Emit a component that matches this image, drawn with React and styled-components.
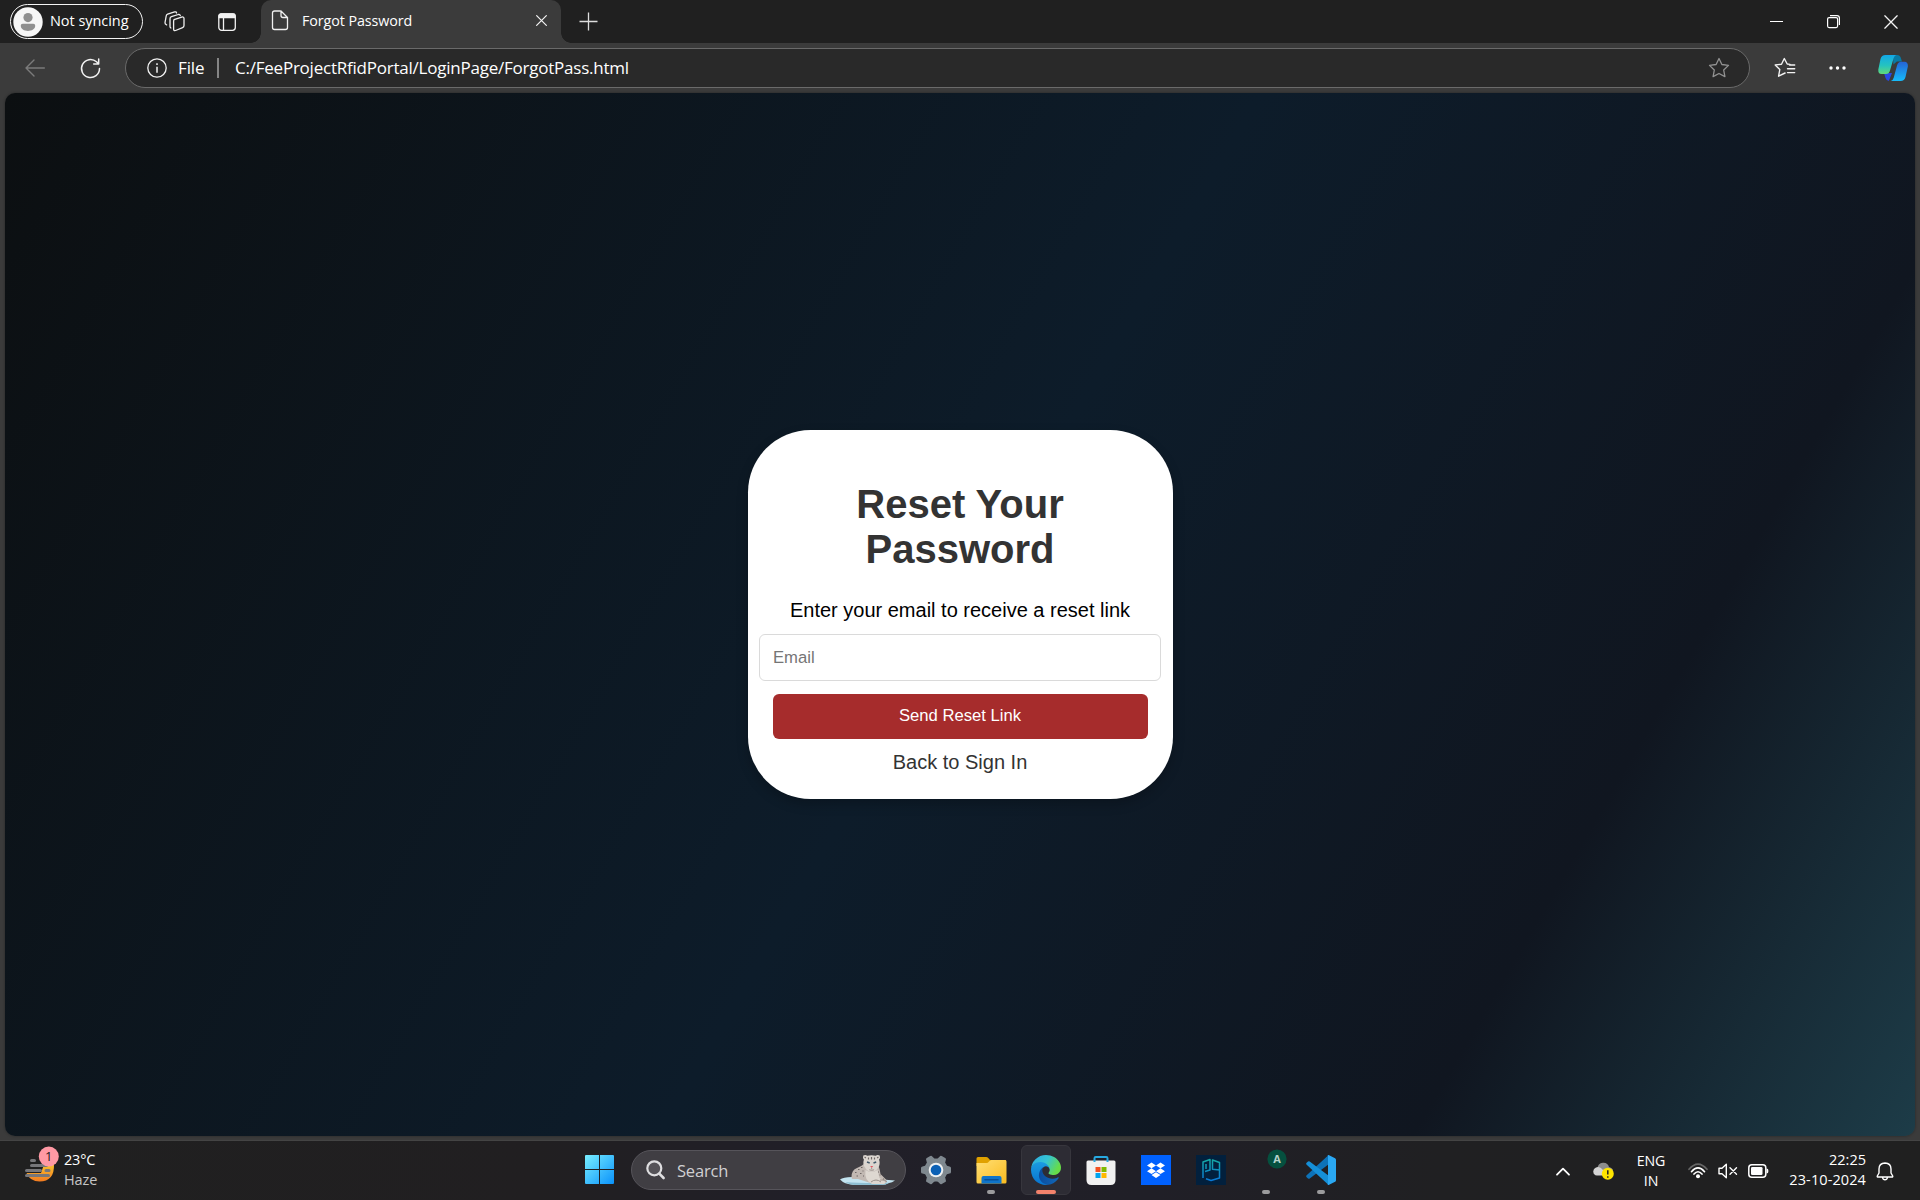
import React from "react";
import styled, { createGlobalStyle, css } from "styled-components";

const ui = `"Open Sans", "Noto Sans", sans-serif`;

const Global = createGlobalStyle`
  * { box-sizing: border-box; }
  body { margin: 0; background: #3b3b3b; overflow: hidden; }
`;

const Screen = styled.div`
  width: 1920px;
  height: 1200px;
  display: flex;
  flex-direction: column;
  background: #3b3b3b;
  font-family: ${ui};
  color: #fff;
  overflow: hidden;
`;

const Text = styled.span`
  font-family: ${ui};
  font-size: ${(p) => p.$size || 15}px;
  letter-spacing: ${(p) => p.$track || 0}px;
  line-height: ${(p) => p.$line || 20}px;
  color: ${(p) => p.$color || "#fff"};
  white-space: nowrap;
`;

const Icon = styled.svg`
  display: block;
  flex: none;
  overflow: visible;
`;

/* ---------- title bar ---------- */

const TitleBar = styled.header`
  height: 43px;
  flex: none;
  display: flex;
  align-items: flex-start;
  background: #202020;
`;

const Profile = styled.div`
  width: 133px;
  height: 35px;
  margin: 4px 0 0 10px;
  padding-left: 2px;
  display: flex;
  align-items: center;
  gap: 7px;
  border: 1.5px solid #f4f4f4;
  border-radius: 18px;
`;

const ProfileName = styled(Text)`
  padding-bottom: 2px;
`;

const TitleIcons = styled.div`
  height: 43px;
  margin-left: 21px;
  display: flex;
  align-items: center;
  gap: 33px;
  width: 97px;
`;

const Tab = styled.div`
  position: relative;
  width: 300px;
  height: 43px;
  padding: 0 14px 2px 10px;
  display: flex;
  align-items: center;
  background: #3b3b3b;
  border-radius: 10px 10px 0 0;

  &::before, &::after {
    content: "";
    position: absolute;
    bottom: 0;
    width: 10px;
    height: 10px;
  }
  &::before {
    left: -10px;
    background: radial-gradient(circle at 0 0, #202020 9.5px, #3b3b3b 10px);
  }
  &::after {
    right: -10px;
    background: radial-gradient(circle at 100% 0, #202020 9.5px, #3b3b3b 10px);
  }
`;

const TabTitle = styled(Text)`
  flex: 1;
  margin-left: 13px;
`;

const NewTab = styled.div`
  height: 42px;
  margin-left: 18px;
  display: flex;
  align-items: center;
  flex: 1;
`;

const WindowButtons = styled.div`
  height: 43px;
  display: flex;
  align-items: center;
  gap: 44px;
  padding-right: 22px;
`;

/* ---------- address bar ---------- */

const Toolbar = styled.nav`
  height: 50px;
  flex: none;
  display: flex;
  align-items: center;
  background: #3b3b3b;
`;

const NavButtons = styled.div`
  width: 125px;
  padding-left: 25px;
  display: flex;
  align-items: center;
  gap: 35px;
`;

const Address = styled.div`
  width: 1625px;
  height: 40px;
  padding: 0 19px 0 21px;
  display: flex;
  align-items: center;
  background: #292929;
  border: 1px solid #6a6a6a;
  border-radius: 20px;
`;

const Scheme = styled(Text)`
  width: 39px;
  margin-left: 11px;
  padding-bottom: 1px;
`;

const Divider = styled.i`
  width: 2px;
  height: 20px;
  margin-right: 16px;
  background: #858585;
`;

const Url = styled(Text)`
  flex: 1;
  padding-bottom: 1px;
`;

const Actions = styled.div`
  flex: 1;
  height: 40px;
  display: flex;
  align-items: center;
  justify-content: space-between;
  padding: 0 12px 0 24px;
`;

/* ---------- page ---------- */

const Viewport = styled.main`
  width: 1910px;
  height: 1043px;
  margin: 0 0 0 5px;
  flex: none;
  display: flex;
  align-items: center;
  justify-content: center;
  border-radius: 10px;
  background: linear-gradient(120deg, #0c0f11 0%, #0d1c2a 50%, #101620 80%, #1d3c48 100%);
  box-shadow: 0 0 3px rgba(0, 0, 0, 0.35);
`;

const Card = styled.form`
  width: 425px;
  height: 369px;
  padding: 52px 11px 0;
  margin: 0;
  display: flex;
  flex-direction: column;
  align-items: center;
  background: #fff;
  border-radius: 62.5px;
  box-shadow: 0 5px 12px rgba(0, 0, 0, 0.22);
  font-family: "Liberation Sans", Arial, sans-serif;
  text-align: center;
`;

const Heading = styled.h1`
  width: 300px;
  margin: 0;
  font-size: 40px;
  line-height: 45px;
  font-weight: 700;
  color: #333;
`;

const Hint = styled.p`
  margin: 27px 0 0;
  font-size: 20px;
  line-height: 23px;
  color: #000;
`;

const Field = styled.input`
  width: 402px;
  height: 47px;
  margin-top: 12px;
  padding: 0 13px;
  border: 1px solid #dadada;
  border-radius: 6px;
  background: #fff;
  font: 16.67px "Liberation Sans", Arial, sans-serif;
  outline: none;
  &::placeholder { color: #757575; opacity: 1; }
`;

const Submit = styled.button`
  width: 375px;
  height: 45px;
  margin-top: 13px;
  padding: 0 0 2px;
  border: 0;
  border-radius: 6px;
  background: #a62c2c;
  color: #fff;
  font: 16.67px "Liberation Sans", Arial, sans-serif;
`;

const Back = styled.a`
  margin-top: 12px;
  font-size: 20px;
  line-height: 23px;
  color: #333;
`;

/* ---------- taskbar ---------- */

const Taskbar = styled.footer`
  height: 60px;
  margin-top: 4px;
  flex: none;
  display: grid;
  grid-template-columns: 570px 1fr 390px;
  background: linear-gradient(90deg, #202020 0%, #211f21 28%, #211f28 42%, #201f27 60%, #202022 75%, #202020 100%);
  border-top: 1px solid #444;
`;

const Weather = styled.div`
  display: flex;
  padding: 6px 0 0 25px;
  gap: 4px;
`;

const Stack = styled.div`
  display: flex;
  flex-direction: column;
  flex: none;
  width: ${(p) => (p.$width ? `${p.$width}px` : "auto")};
  margin-left: ${(p) => p.$left || 0}px;
  align-items: ${(p) => p.$align || "flex-start"};
  padding-top: ${(p) => p.$top || 0}px;
`;

const Apps = styled.div`
  display: flex;
  align-items: flex-start;
  padding: 4px 0 0 4px;
`;

const AppButton = styled.div`
  width: 50px;
  height: 50px;
  margin-right: 5px;
  flex: none;
  display: flex;
  flex-direction: column;
  align-items: center;
  padding-top: 9px;
  border-radius: 6px;
  border: 1px solid transparent;
  ${(p) => p.$active && css`
    background: #2d2c34;
    border-color: #37363d;
  `}
`;

const Running = styled.i`
  width: ${(p) => (p.$active ? 20 : 8)}px;
  height: 4px;
  flex: none;
  margin-top: 5px;
  border-radius: 2px;
  background: ${(p) => (p.$active ? "#f3826b" : "#9b9b9d")};
`;

const SearchBox = styled.div`
  width: 275px;
  height: 40px;
  margin: 5px 5px 0 2px;
  padding: 0 9px 0 14px;
  display: flex;
  align-items: center;
  background: #403e43;
  border: 1px solid #56545a;
  border-radius: 20px;
`;

const SearchLabel = styled(Text)`
  flex: 1;
  margin-left: 12px;
  padding-top: 1px;
`;

const Tray = styled.div`
  display: flex;
  align-items: flex-start;
`;

const TrayIcon = styled.div`
  height: 60px;
  display: flex;
  align-items: center;
  margin-left: ${(p) => p.$left}px;
`;

/* ---------- drawings ---------- */

const Avatar = () => (
  <Icon width="30" height="30" viewBox="0 0 30 30">
    <circle cx="15" cy="15" r="14.7" fill="#f6f6f6" />
    <circle cx="15" cy="10.6" r="4.6" fill="#8f8f8f" />
    <path d="M9.8 16.8h10.4c1.3 0 2 .9 2 2 0 3.3-3.300 5.200-7.200 5.200s-7.200-1.900-7.200-5.200c0-1.100.7-2 2-2z" fill="#8f8f8f" />
  </Icon>
);

const Workspaces = () => (
  <Icon width="21" height="21" viewBox="0 0 21 21" fill="none" stroke="#eee" strokeWidth="1.3" strokeLinejoin="round" strokeLinecap="round">
    <path d="M10 8.600 17.700 6.100q2.300-.6 2.300 1.500v7q0 1.500-1.400 2l-7 2.900q-2 .6-2-1.400V10.200q0-1.200.8-1.600z" />
    <path d="M16.300 4.600q-.4-1.500-2-1.100L7.400 5.700Q6 6.200 6 7.700v7.800q0 1 .9 1.500" />
    <path d="M12.600 2q-.5-1.600-2-1.100L3.600 3.200Q2.300 3.700 2.200 5L1 11.700q-.2 1.500 1.600 2.200" />
  </Icon>
);

const TabActions = () => (
  <Icon width="18" height="18" viewBox="0 0 18 18" fill="none" stroke="#f2f2f2" strokeWidth="1.3">
    <rect x=".8" y=".8" width="16.500" height="16.500" rx="2.800" />
    <path d="M1 2.600Q1 1 2.800 1h12.500Q17 1 17 2.600V4.500H1z" fill="#f2f2f2" />
    <path d="M5.500 5v12" />
  </Icon>
);

const PageIcon = () => (
  <Icon width="18" height="21" viewBox="0 0 18 21" fill="none" stroke="#f0f0f0" strokeWidth="1.3" strokeLinejoin="round">
    <path d="M9.500 1H3.600Q1.500 1 1.500 3v14.500q0 2 2.100 2h10.800q2.100 0 2.100-2V7.500L10 1v4.500q0 2 2 2h4.500" />
  </Icon>
);

const Cross = ({ size, w = 1.3 }) => (
  <Icon width={size} height={size} viewBox="0 0 12 12" stroke="#f4f4f4" strokeWidth={w} strokeLinecap="round">
    <path d="M.7.7l10.600 10.600M11.300.7.7 11.300" />
  </Icon>
);

const Star = ({ color }) => (
  <Icon width="22" height="22" viewBox="0 0 22 22" fill="none" stroke={color} strokeWidth="1.300" strokeLinejoin="round">
    <path d="M11 1.500l2.900 6 6.600.9-4.800 4.600 1.200 6.600-5.900-3.100-5.900 3.100 1.200-6.600L1.500 8.400l6.600-.9z" />
  </Icon>
);

const Favorites = () => (
  <Icon width="22" height="22" viewBox="0 0 22 22" fill="none" stroke="#f2f2f2" strokeWidth="1.400" strokeLinejoin="round" strokeLinecap="round">
    <path d="M16 7.400l-2.800-.4L10.300 1.500 7.500 7.200 1.200 8l4.600 4.500-1.200 6.700 6.500-3.200M15.500 8h5.200M13.500 11.800h7.200M13.500 15.600h7.200" />
  </Icon>
);

const More = () => (
  <Icon width="17" height="4" viewBox="0 0 17 4" fill="#fff">
    <circle cx="2" cy="2" r="1.700" /><circle cx="8.500" cy="2" r="1.700" /><circle cx="15" cy="2" r="1.700" />
  </Icon>
);

const Copilot = () => (
  <Icon width="30" height="28" viewBox="0 0 30 28">
    <defs>
      <linearGradient id="cpA" x1="0" y1="0" x2="0" y2="1">
        <stop offset="0" stopColor="#12a8e8" /><stop offset=".55" stopColor="#25c3bf" /><stop offset="1" stopColor="#62d879" />
      </linearGradient>
      <linearGradient id="cpB" x1="0" y1="0" x2="0" y2="1">
        <stop offset="0" stopColor="#2463d6" /><stop offset="1" stopColor="#16bcfa" />
      </linearGradient>
    </defs>
    <path d="M15 1h4q3 0 3.900 3l1 3.500h-5l-3.500 3z" fill="#087aa5" />
    <path d="M6 19h8l-3.200 8q-2.400-.3-3.300-3z" fill="#2948e4" />
    <path d="M7.500 1h10.800q-1.800.3-2.700 3.300L12 16.600q-1 3.500-4 3.500H3.500Q0 20 .3 15.500L2.500 5Q3.500 1 7.500 1z" fill="url(#cpA)" />
    <path d="M22.500 27H12.800q2-.2 2.900-3.200l3.400-12.500q1-3.500 4-3.500h3.400q3.500 0 3.400 4.500L27.500 23q-1 4-5 4z" fill="url(#cpB)" />
  </Icon>
);

const HazeIcon = () => (
  <Icon width="35" height="40" viewBox="0 0 35 40">
    <defs>
      <linearGradient id="sun" x1="0" y1="0" x2="0" y2="1">
        <stop offset="0" stopColor="#f9c22f" /><stop offset="1" stopColor="#f27a20" />
      </linearGradient>
    </defs>
    <path d="M1.500 26h14.500l3-8.500h10q.5 17-14.500 17Q5 34.500 1.500 26z" fill="url(#sun)" />
    <path d="M6.500 13.500h3M6.500 18.500h15M1.500 23.500h14M21 23.500h3M1.500 28.500h22" stroke="#77777a" strokeWidth="3" strokeLinecap="round" />
    <circle cx="23.800" cy="9.500" r="10" fill="#ff99a4" />
    <text x="23.800" y="14" textAnchor="middle" fontFamily="Open Sans, sans-serif" fontSize="13" fill="#221a1c">1</text>
  </Icon>
);

const Windows = () => (
  <Icon width="29" height="29" viewBox="0 0 29 29">
    <defs>
      <linearGradient id="win" gradientUnits="userSpaceOnUse" x1="0" y1="0" x2="29" y2="29">
        <stop offset="0" stopColor="#78eeff" /><stop offset="1" stopColor="#0a92fb" />
      </linearGradient>
    </defs>
    <path d="M1 0h13v14H0V1q0-1 1-1zM15 0h13q1 0 1 1v13H15zM0 15h14v14H1q-1 0-1-1zM15 15h14v13q0 1-1 1H15z" fill="url(#win)" />
  </Icon>
);

const Magnifier = () => (
  <Icon width="19" height="20" viewBox="0 0 19 20" fill="none" stroke="#dedee0" strokeWidth="2.200" strokeLinecap="round">
    <circle cx="8.300" cy="8.300" r="7" fill="#555358" />
    <path d="M13.300 13.700l4.300 4.300" strokeWidth="2.600" />
  </Icon>
);

const Leopard = () => (
  <Icon width="56" height="32" viewBox="0 0 56 32">
    <path d="M0 25.500q3-2.500 12-2.500l43 3.500q-3 2-6 2.500-3 2-8 2H14Q4 30 0 25.500z" fill="#c3e4f0" />
    <path d="M5 28q18 1.500 44 .8-3 2.200-8 2.200H14q-5-.5-9-3z" fill="#8fbfd2" />
    <path d="M11.500 23q0-7 5.500-9 4-1.500 7-4h14q2 6 2.500 10l6 6q.5 3-2 3.500H32L18 25h-5.500q-1.200-.5-1-2z" fill="#c2b9b3" />
    <path d="M25.500 16q6 4 12 0l2 8 6 4q0 2-2 2H32q-8-4-6.500-14z" fill="#ded8d1" />
    <path d="M23.300 1.500q2.200-1.200 4 .3 4.300-1.300 8.400 0 1.800-1.500 4-.3.800 2-.6 4 1.500 5-1 8-1.600 4-6.400 4.300-5-.3-6.600-4.300-2.700-3-1.200-8-1.400-2-.6-4z" fill="#dcd6d0" />
    <path d="M24.600 3l1.300 1M38.400 3l-1.300 1M28.500 3.500v2M31.500 3v2.500M34.500 3.500v2M15 18.500h1.500M18 15.500h1.500M20 19.500h1.500M16.500 22h1.500M22.500 17h1M23 22h1M38 18h1M39.500 21h1M43 25h1M21 13.500h1.500" stroke="#6f6866" strokeWidth="1.200" />
    <path d="M27 8l2.700 1M36.200 8l-2.700 1" stroke="#40586a" strokeWidth="1.500" />
    <path d="M30.200 12h3l-1.500 2z" fill="#e0565f" />
    <path d="M31.700 14v1.300M29.300 15.800q2.400 1 4.800 0" stroke="#8c817c" strokeWidth=".8" fill="none" />
    <path d="M31 28q5-4 10 0M40 26q5-1 7 2" stroke="#938982" strokeWidth=".9" fill="none" />
  </Icon>
);

const teeth = [0, 60, 120, 180, 240, 300];
const Gear = () => (
  <Icon width="30" height="30" viewBox="0 0 30 30">
    <defs>
      <linearGradient id="gear" gradientUnits="userSpaceOnUse" x1="0" y1="0" x2="0" y2="30">
        <stop offset="0" stopColor="#9aa1a7" /><stop offset="1" stopColor="#69737b" />
      </linearGradient>
    </defs>
    <circle cx="15" cy="15" r="11.600" fill="#7f888f" />
    {teeth.map((a) => (
      <path key={a} d="M18 15 20 9l8.500 2.500q1.500 0 1.500 1.500v4q0 1.500-1.500 1.500L20 21z" transform={`rotate(${a} 15 15)`} fill="#7f888f" />
    ))}
    <circle cx="15" cy="15" r="7.300" fill="#eef0f2" />
    <circle cx="15" cy="15" r="5.300" fill="#0b60b5" />
  </Icon>
);

const Folder = () => (
  <Icon width="31" height="30" viewBox="0 0 31 30">
    <defs>
      <linearGradient id="fold" x1="0" y1="0" x2="1" y2="1">
        <stop offset="0" stopColor="#ffdf75" /><stop offset="1" stopColor="#fabb1f" />
      </linearGradient>
    </defs>
    <path d="M.5 3.500Q.5 2 2 2h8q1.500 0 2.500 1.200L14 5H30v6H.5z" fill="#e0a100" />
    <path d="M.5 8h10q1.500 0 2.500-1.500T15.500 5H29q1.500 0 1.500 1.500V27q0 1.500-1.500 1.500H2Q.5 28.500.5 27z" fill="url(#fold)" />
    <path d="M5.500 28.500V23q0-2 2-2h16q2 0 2 2v5.500z" fill="#0f74c9" />
    <path d="M9 24.700h13" stroke="#074f97" strokeWidth="1.600" strokeLinecap="round" />
  </Icon>
);

const Edge = () => (
  <Icon width="30" height="30" viewBox="0 0 256 256">
    <defs>
      <linearGradient id="eA" x1="0" y1="0" x2="1" y2="0"><stop offset="0" stopColor="#0b4a9b" /><stop offset="1" stopColor="#1168b8" /></linearGradient>
      <linearGradient id="eB" x1="0" y1="0" x2="0" y2="1"><stop offset="0" stopColor="#1c9ee3" /><stop offset="1" stopColor="#0873ce" /></linearGradient>
      <linearGradient id="eC" x1="0" y1="0" x2="1" y2=".4"><stop offset="0" stopColor="#2ba9e5" /><stop offset=".55" stopColor="#35c4d2" /><stop offset="1" stopColor="#66dc49" /></linearGradient>
    </defs>
    <path d="M231 190.500c-3.400 1.800-6.900 3.300-10.500 4.700a101.900 101.900 0 0 1-35.900 6.400c-47.300 0-88.500-32.500-88.500-74.300a31.500 31.500 0 0 1 16.400-27.300c-42.800 1.800-53.800 46.400-53.800 72.500 0 73.900 68.100 81.400 82.800 81.400 7.900 0 19.800-2.300 27-4.600l1.300-.4a128.300 128.300 0 0 0 66.600-52.800 4 4 0 0 0-5.400-5.600z" fill="url(#eA)" />
    <path d="M105.700 241.400a79.200 79.200 0 0 1-22.700-21.300 80.700 80.700 0 0 1 29.500-120c3.200-1.500 8.500-4.100 15.600-4a32.400 32.400 0 0 1 25.700 13 31.900 31.900 0 0 1 6.300 18.700c0-.2 24.500-79.600-80-79.600C36.200 48.200 0 90 0 126.600a130.500 130.500 0 0 0 12.100 56 128 128 0 0 0 156.400 67 75.500 75.500 0 0 1-62.800-8.200z" fill="url(#eB)" />
    <path d="M152.300 148.900c-.9 1-3.300 2.500-3.300 5.700 0 2.600 1.700 5.100 4.700 7.300 14.400 10 41.500 8.600 41.600 8.600a59.600 59.600 0 0 0 30.300-8.300A61.400 61.400 0 0 0 256 109.200c.3-22.400-8-37.300-11.300-43.900C223.500 23.900 177.700 0 128 0A128 128 0 0 0 0 126.200c.5-36.500 36.800-66 80-66 3.500 0 23.500.3 42 10 16.300 8.600 24.900 18.900 30.800 29.200 6.200 10.700 7.300 24.100 7.300 29.500 0 5.300-2.700 13.300-7.800 20z" fill="url(#eC)" />
  </Icon>
);

const Store = () => (
  <Icon width="30" height="30" viewBox="0 0 30 30">
    <path d="M.5 7q0-1.500 1.500-1.500h26q1.500 0 1.500 1.500v18q0 5-5 5h-19q-5 0-5-5z" fill="#f1f1f1" />
    <path d="M8.500 7V3.200q0-1.200 1.200-1.200h10.600q1.200 0 1.200 1.200V7" fill="none" stroke="#27a9e1" strokeWidth="2" />
    <path d="M9.500 12h5v5h-5z" fill="#f25022" /><path d="M15.500 12h5v5h-5z" fill="#7fba00" />
    <path d="M9.500 18h5v5h-5z" fill="#00a4ef" /><path d="M15.500 18h5v5h-5z" fill="#ffb900" />
  </Icon>
);

const Dropbox = () => (
  <Icon width="30" height="30" viewBox="0 0 30 30">
    <path d="M0 0h30v30H0z" fill="#0061fe" />
    <path d="M10.500 7.500l4.500 2.900-4.500 2.900L6 10.400zM19.500 7.500l4.500 2.900-4.500 2.900-4.500-2.900zM10.500 13.300l4.500 2.900-4.500 2.900L6 16.200zM19.500 13.300l4.500 2.900-4.500 2.900-4.500-2.900zM15 17.200l4.500 2.900L15 23l-4.500-2.900z" fill="#fff" />
  </Icon>
);

const Shield = () => (
  <Icon width="30" height="30" viewBox="0 0 30 30">
    <defs>
      <linearGradient id="sh" gradientUnits="userSpaceOnUse" x1="0" y1="4" x2="0" y2="26"><stop offset="0" stopColor="#16aaa4" /><stop offset="1" stopColor="#0877d8" /></linearGradient>
    </defs>
    <path d="M0 0h30v30H0z" fill="#02203d" />
    <path d="M7 23V7l7-2.500V15l-5 1.500M10 9v5M23.500 15l-7-.8V5l7 2.500V23L15 25.500 10 23.800M16.500 10v4" fill="none" stroke="url(#sh)" strokeWidth="1.500" strokeLinejoin="round" />
  </Icon>
);

const Badge = () => (
  <Icon width="30" height="30" viewBox="0 0 30 30">
    <circle cx="26" cy="4" r="9.600" fill="#05503f" />
    <text x="26" y="8.300" textAnchor="middle" fontFamily="Open Sans, sans-serif" fontWeight="700" fontSize="11" fill="#b5d2ca">A</text>
  </Icon>
);

const Code = () => (
  <Icon width="30" height="30" viewBox="0 0 30 30">
    <path d="M.4 20.500q-.7.900.2 1.700l1.400 1.300q.9.600 1.700 0L23 9V.7q-.8-.6-1.500.2z" fill="#0d72b8" />
    <path d="M.4 9.500q-.7-.9.200-1.700L2 6.500q.9-.6 1.700 0L23 21v8.300q-.8.600-1.500-.2z" fill="#158fd8" />
    <path d="M21.300.6q.8-.8 1.800-.3l6 2.900q.9.500.9 1.500v20.600q0 1-.9 1.500l-6 2.900q-1 .5-1.800-.3.700.3.700-1V1.600q0-1.300-.7-1z" fill="#2aa8f3" />
  </Icon>
);

const Chevron = () => (
  <Icon width="14" height="9" viewBox="0 0 14 9" fill="none" stroke="#fff" strokeWidth="1.800" strokeLinecap="round" strokeLinejoin="round">
    <path d="M1 7.700l6-6 6 6" />
  </Icon>
);

const Cloud = () => (
  <Icon width="21" height="18" viewBox="0 0 21 18">
    <path d="M5 4Q7 .5 10.500.8 15 1 16 5q4 1 4 4l-7 4L4 8z" fill="#8d8d8d" />
    <path d="M4 13.500q-3.700-.3-3.700-4 .2-4 4.700-4.500 3 0 4.500 2.500l3.500 6z" fill="#d3d3d3" />
    <circle cx="14.800" cy="11.800" r="6" fill="#ffe500" />
    <path d="M14.800 8.300v4.200M14.800 14.300v1.400" stroke="#222" strokeWidth="1.500" />
  </Icon>
);

const Wifi = () => (
  <Icon width="20" height="16" viewBox="0 0 20 16" fill="none" strokeWidth="1.700" strokeLinecap="round">
    <path d="M1 6.300q9-10.500 18 0" stroke="#666" />
    <path d="M3.500 8.700q6.500-7.500 13 0M6 11q4-4.500 8 0" stroke="#fff" />
    <circle cx="10" cy="13.300" r="2" fill="#fff" />
  </Icon>
);

const Muted = () => (
  <Icon width="20" height="16" viewBox="0 0 20 16" fill="none" stroke="#fff" strokeWidth="1.400" strokeLinejoin="round" strokeLinecap="round">
    <path d="M1 5.200h3L8.300 1.300v13.400L4 10.800H1z" /><path d="M12 4.800l6.500 6.500M18.500 4.800L12 11.300" />
  </Icon>
);

const Battery = () => (
  <Icon width="21" height="14" viewBox="0 0 21 14">
    <rect x=".8" y=".8" width="17" height="12.400" rx="3" fill="none" stroke="#fff" strokeWidth="1.500" />
    <rect x="3" y="3" width="11.500" height="8" rx="1.300" fill="#fff" />
    <path d="M18.500 4.500q1.800.2 1.800 1.500v2q0 1.300-1.800 1.500z" fill="#fff" />
  </Icon>
);

const Bell = () => (
  <Icon width="18" height="19" viewBox="0 0 18 19" fill="none" stroke="#fff" strokeWidth="1.400" strokeLinejoin="round" strokeLinecap="round">
    <path d="M9 1Q3 1.200 3 7v4l-1.700 3q-.3 1 .7 1h14q1 0 .7-1L15 11V7Q15 1.200 9 1zM6.500 15.300q.5 2.400 2.500 2.400t2.500-2.400" />
  </Icon>
);

const apps = [
  { name: "settings", icon: <Gear /> },
  { name: "files", icon: <Folder />, running: true },
  { name: "edge", icon: <Edge />, running: true, active: true },
  { name: "store", icon: <Store /> },
  { name: "dropbox", icon: <Dropbox /> },
  { name: "shield", icon: <Shield /> },
  { name: "account", icon: <Badge />, running: true },
  { name: "code", icon: <Code />, running: true },
];

export default function App() {
  return (
    <Screen>
      <Global />
      <TitleBar>
        <Profile>
          <Avatar />
          <ProfileName $size={14.5} $track={-0.05}>Not syncing</ProfileName>
        </Profile>
        <TitleIcons>
          <Workspaces />
          <TabActions />
        </TitleIcons>
        <Tab>
          <PageIcon />
          <TabTitle $size={14.3} $track={-0.08}>Forgot Password</TabTitle>
          <Cross size={11} />
        </Tab>
        <NewTab>
          <Icon width="19" height="19" viewBox="0 0 19 19" stroke="#ddd" strokeWidth="1.300"><path d="M9.500.5v18M.5 9.500h18" /></Icon>
        </NewTab>
        <WindowButtons>
          <Icon width="13" height="13" viewBox="0 0 13 13" stroke="#fff" strokeWidth="1"><path d="M0 6.500h13" /></Icon>
          <Icon width="13" height="13" viewBox="0 0 13 13" fill="none" stroke="#fff" strokeWidth="1.200">
            <rect x=".6" y="2.600" width="10" height="10" rx="1.500" /><path d="M3 .6h7q2.400 0 2.400 2.400v7" />
          </Icon>
          <Cross size={14} w={1.1} />
        </WindowButtons>
      </TitleBar>

      <Toolbar>
        <NavButtons>
          <Icon width="20" height="18" viewBox="0 0 20 18" fill="none" stroke="#7b7b7b" strokeWidth="1.400" strokeLinecap="round" strokeLinejoin="round"><path d="M19.300 9H1M9 1L1 9l8 8" /></Icon>
          <Icon width="21" height="21" viewBox="0 0 21 21" fill="none" stroke="#f2f2f2" strokeWidth="1.500" strokeLinecap="round" strokeLinejoin="round"><path d="M19.500 10.500a9 9 0 1 1-3-6.700l2 2M18.700 1v5h-5" /></Icon>
        </NavButtons>
        <Address>
          <Icon width="20" height="20" viewBox="0 0 20 20" fill="none" stroke="#f2f2f2" strokeWidth="1.300"><circle cx="10" cy="10" r="9.200" /><path d="M10 8.800v6M10 5.300v1.600" strokeWidth="1.500" /></Icon>
          <Scheme $size={17} $track={-0.1}>File</Scheme>
          <Divider />
          <Url $size={17} $track={-0.23}>C:/FeeProjectRfidPortal/LoginPage/ForgotPass.html</Url>
          <Star color="#929292" />
        </Address>
        <Actions>
          <Favorites />
          <More />
          <Copilot />
        </Actions>
      </Toolbar>

      <Viewport>
        <Card onSubmit={(e) => e.preventDefault()}>
          <Heading>Reset Your Password</Heading>
          <Hint>Enter your email to receive a reset link</Hint>
          <Field type="email" placeholder="Email" />
          <Submit type="submit">Send Reset Link</Submit>
          <Back>Back to Sign In</Back>
        </Card>
      </Viewport>

      <Taskbar>
        <Weather>
          <HazeIcon />
          <Stack $top={3}>
            <Text $size={14.5} $track={-0.2}>23°C</Text>
            <Text $size={14.5} $track={-0.1} $color="#c5c5c5">Haze</Text>
          </Stack>
        </Weather>
        <Apps>
          <AppButton><Windows /></AppButton>
          <SearchBox>
            <Magnifier />
            <SearchLabel $size={16.5} $track={-0.2} $color="#d0d0d2">Search</SearchLabel>
            <Leopard />
          </SearchBox>
          {apps.map((a) => (
            <AppButton key={a.name} $active={a.active}>
              {a.icon}
              {a.running && <Running $active={a.active} />}
            </AppButton>
          ))}
        </Apps>
        <Tray>
          <TrayIcon $left={26}><Chevron /></TrayIcon>
          <TrayIcon $left={23}><Cloud /></TrayIcon>
          <Stack $top={10} $align="center" $left={17} $width={40}>
            <Text $size={14.2} $track={-0.1}>ENG</Text>
            <Text $size={14.2}>IN</Text>
          </Stack>
          <TrayIcon $left={17}><Wifi /></TrayIcon>
          <TrayIcon $left={10}><Muted /></TrayIcon>
          <TrayIcon $left={10}><Battery /></TrayIcon>
          <Stack $top={9} $align="flex-end" $left={12} $width={85}>
            <Text $size={14.5}>22:25</Text>
            <Text $size={14.5} $track={0.1}>23-10-2024</Text>
          </Stack>
          <TrayIcon $left={10}><Bell /></TrayIcon>
        </Tray>
      </Taskbar>
    </Screen>
  );
}
